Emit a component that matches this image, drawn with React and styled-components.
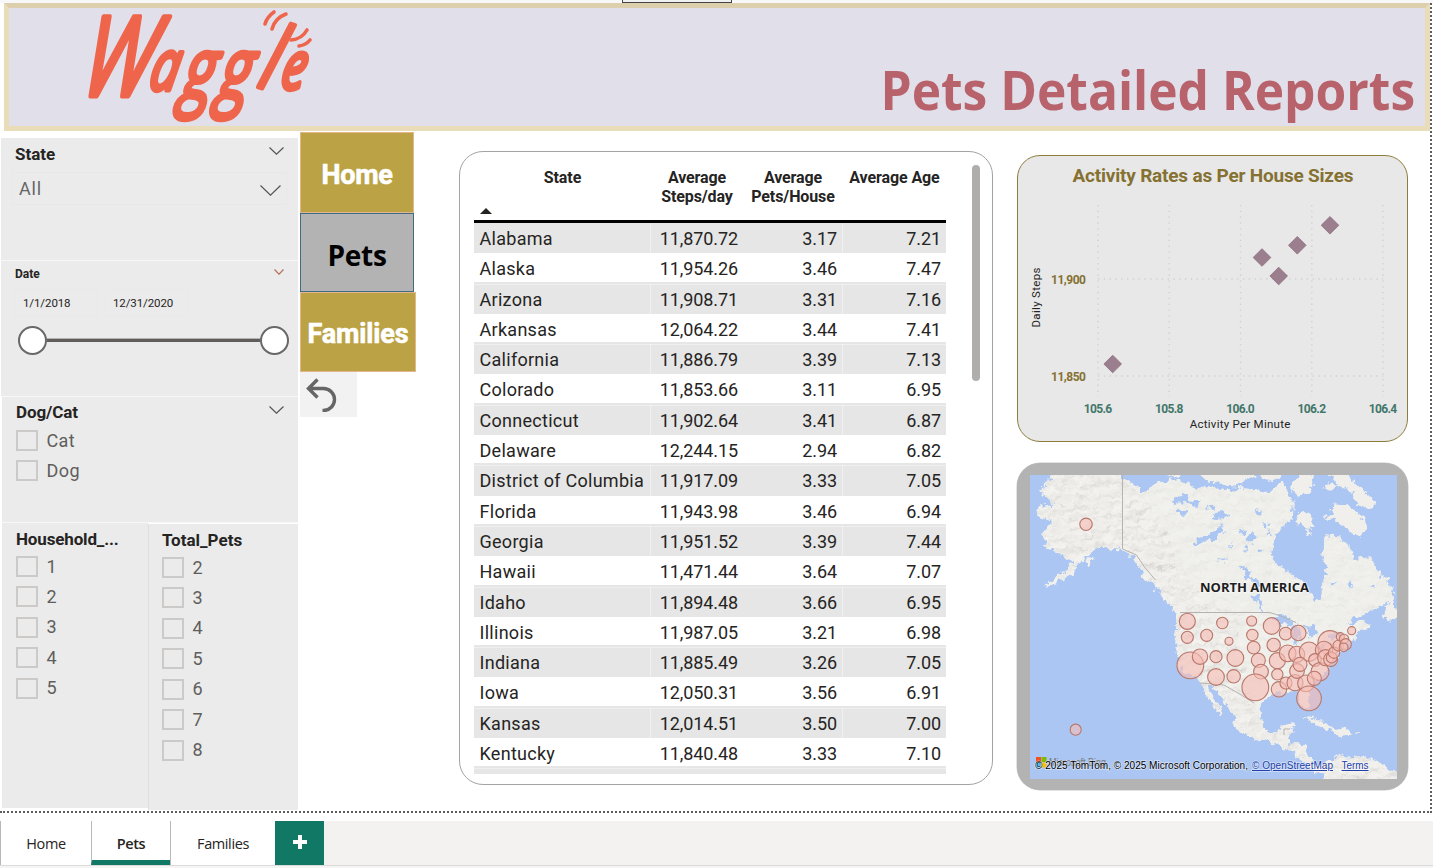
import React from "react";
import styled, { createGlobalStyle } from "styled-components";

const GlobalStyle = createGlobalStyle`
  * { box-sizing: border-box; }
  body { margin: 0; background: #fff; overflow: hidden; }
`;

const din = `Roboto, "Liberation Sans", sans-serif`;
const segoe = `"Open Sans", "Noto Sans", sans-serif`;

const Page = styled.div`
  width: 1442px;
  height: 868px;
  display: flex;
  flex-direction: column;
  font-family: ${din};
  color: #252423;
`;

const TopStrip = styled.div`
  width: 1433px;
  height: 3px;
  background: #f7f8f7;
  display: flex;
  justify-content: center;
  padding-right: 79px;
`;

const Handle = styled.div`
  width: 110px;
  height: 3px;
  background: #f0f0f0;
  border: 1px solid #444;
  border-top: 0;
`;

const Canvas = styled.div`
  width: 1432px;
  height: 810px;
  border-right: 2px dotted #605e5c;
  border-bottom: 2px dotted #605e5c;
`;

const Banner = styled.header`
  height: 128px;
  margin-left: 4px;
  padding-right: 10px;
  background: #e1dfe9;
  border: 5px solid #e9ddb9;
  border-top-color: #dccfae;
  display: flex;
  justify-content: space-between;
  align-items: flex-end;
`;

const Logo = styled.svg`
  width: 240px;
  height: 118px;
  margin-left: 71px;
  overflow: visible;
`;

const Title = styled.h1`
  margin: 0 0 6px;
  font: 700 54px/62px ${segoe};
  color: #b8626b;
  white-space: nowrap;
  transform: scaleX(${(p) => p.$stretch});
  transform-origin: right;
`;

const Body = styled.main`
  height: 680px;
  display: flex;
  align-items: flex-start;
  padding-left: 1px;
`;

const Sidebar = styled.aside`
  width: 297px;
  margin-top: 7px;
`;

const Panel = styled.section`
  height: ${(p) => p.$h}px;
  padding: ${(p) => p.$pad};
  margin-left: ${(p) => p.$inset || 0}px;
  background: #ebebeb;
  border-bottom: ${(p) => (p.$line ? "1px solid #f7f7f7" : "0")};
`;

const PanelHead = styled.div`
  display: flex;
  justify-content: space-between;
  align-items: flex-start;
`;

const PanelTitle = styled.div`
  font-weight: 700;
  font-size: ${(p) => p.$size || 17}px;
  line-height: 20px;
  letter-spacing: ${(p) => p.$ls || 0}px;
  white-space: nowrap;
`;

const Chevron = ({ w, h, color = "#555", mt = 0 }) => (
  <svg width={w} height={h} viewBox={`0 0 ${w} ${h}`} style={{ marginTop: mt }}>
    <path d={`M.5 .5 L${w / 2} ${h - 0.8} L${w - 0.5} .5`} fill="none" stroke={color} strokeWidth="1.2" />
  </svg>
);

const Dropdown = styled.div`
  display: flex;
  justify-content: space-between;
  align-items: center;
  height: 33px;
  margin: 8px -3px 0 -3px;
  padding: 0 5px 0 6px;
  border: 1px solid #e8e8e8;
  font-size: 18px;
  letter-spacing: 0.8px;
  color: #666;
`;

const DateRow = styled.div`
  display: flex;
  gap: 7px;
  margin-top: 5px;
`;

const DateBox = styled.div`
  width: 83px;
  height: 28px;
  padding-left: 7px;
  border: 1px solid #e9e9e9;
  font-size: 11.5px;
  line-height: 27px;
  letter-spacing: ${(p) => p.$ls}px;
`;

const Slider = styled.div`
  display: flex;
  align-items: center;
  width: 271px;
  margin: 9px 0 0 3px;
`;

const Knob = styled.div`
  width: 29px;
  height: 29px;
  border: 2px solid #6a6866;
  border-radius: 50%;
  background: #fff;
`;

const Track = styled.div`
  flex: 1;
  height: 4px;
  margin-top: -1px;
  background: #605e5c;
  border-top: 1px solid #b5b3b2;
`;

const CheckList = styled.div`
  display: flex;
  flex-direction: column;
  gap: 9.45px;
  margin-top: ${(p) => p.$top}px;
`;

const CheckRow = styled.label`
  display: flex;
  align-items: center;
  gap: 8.5px;
  height: 21px;
  font-size: 18px;
  line-height: 22px;
  letter-spacing: 0.4px;
  color: #605e5c;
`;

const Box = styled.span`
  width: 22px;
  height: 21px;
  border: 2px solid #cbcac9;
`;

const Split = styled.div`
  display: flex;
  align-items: flex-start;
`;

const HalfPanel = styled.section`
  width: ${(p) => p.$w}px;
  height: ${(p) => p.$h}px;
  margin: ${(p) => p.$m};
  padding: 6px 0 0 ${(p) => (p.$edge ? 13 : 14)}px;
  background: #ebebeb;
  border-left: ${(p) => (p.$edge ? "1px solid #dedede" : "0")};
`;

const Nav = styled.nav`
  width: 117px;
  margin: 1px 0 0 2px;
`;

const NavButton = styled.button`
  display: block;
  width: ${(p) => p.$w}px;
  height: ${(p) => p.$h || 80}px;
  margin: 0;
  padding: 4px 0 0;
  border: 1px solid ${(p) => (p.$active ? "#3f6b87" : "#e3b68d")};
  background: ${(p) => (p.$active ? "#b3b3b3" : "#bba244")};
  color: ${(p) => (p.$active ? "#000" : "#fff")};
  font: 700 ${(p) => (p.$active ? 28 : 27)}px/32px ${(p) => (p.$active ? segoe : din)};
  letter-spacing: ${(p) => p.$ls}px;
  -webkit-text-stroke: ${(p) => (p.$active ? 0 : 0.6)}px currentColor;
`;

const BackButton = styled.button`
  display: block;
  width: 57px;
  height: 45px;
  padding: 4px 0 0 6px;
  border: 0;
  background: #f2f2f2;
  text-align: left;
`;

const TableCard = styled.section`
  display: flex;
  width: 534px;
  height: 634px;
  margin: 20px 0 0 42px;
  padding: 13px 12px 9px 14px;
  border: 1px solid #a3a3a3;
  border-radius: 24px;
`;

const TableBody = styled.div`
  width: 472px;
  height: 609px;
  overflow: hidden;
`;

const cols = "177px 92px 100px 103px";

const HeadRow = styled.div`
  display: grid;
  grid-template-columns: ${cols};
  height: 58px;
  padding-top: 3px;
  border-bottom: 3px solid #000;
  font-weight: 700;
  font-size: 16px;
  line-height: 19px;
  text-align: center;
`;

const HeadCell = styled.div`
  position: relative;
  letter-spacing: -0.1px;
`;

const SortMark = styled.i`
  position: absolute;
  left: 6px;
  top: 40px;
  border: 6px solid transparent;
  border-top: 0;
  border-bottom-color: #252423;
`;

const Row = styled.div`
  display: grid;
  grid-template-columns: ${cols};
  height: 30.3px;
  font-size: 18px;
  line-height: 31px;
  color: #252423;
  background: ${(p) => (p.$shade ? "#e6e6e6" : "#fff")};
  box-shadow: ${(p) => (p.$shade && !p.$first ? "0 -2px 0 #e6e6e6, inset 0 1px 0 #efefef" : "none")};
  position: ${(p) => (p.$shade ? "relative" : "static")};
`;

const Cell = styled.div`
  padding: 0 5px 0 5.500px;
  letter-spacing: ${(p) => (p.$num ? -0.1 : 0.28)}px;
  text-align: ${(p) => (p.$num ? "right" : "left")};
  border-right: ${(p) => (p.$edge ? "1px solid rgba(255,255,255,.4)" : "0")};
  white-space: nowrap;
`;

const ScrollThumb = styled.div`
  width: 8px;
  height: 216px;
  margin-left: 26px;
  border-radius: 4px;
  background: #b0aeac;
`;

const RightColumn = styled.div`
  display: flex;
  flex-direction: column;
  gap: 21px;
  margin: 24px 0 0 24px;
`;

const ChartCard = styled.section`
  width: 391px;
  height: 287px;
  border: 1px solid #8f7d3c;
  border-radius: 23px;
  background: #e8e8e8;
  svg { display: block; margin: -1px; }
`;

const MapCard = styled.section`
  width: 391px;
  height: 327px;
  padding: 12px 11px 11px 13px;
  border-radius: 23px;
  background: #b3b3b3;
  box-shadow: 0 0 0 0.5px #c8c8c8;
  svg { display: block; }
`;

const TabBar = styled.footer`
  display: flex;
  width: 1433px;
  height: 45px;
  margin-top: 8px;
  background: #f3f2f1;
  border-bottom: 1px solid #dcdbda;
  font: 14.5px/44px ${segoe};
`;

const Tab = styled.div`
  width: ${(p) => p.$w}px;
  height: 44px;
  padding-top: 1px;
  background: #fff;
  border-left: 1px solid #b9b8b7;
  border-bottom: ${(p) => (p.$active ? "5px solid #117865" : "0")};
  font-weight: ${(p) => (p.$active ? 600 : 400)};
  text-align: center;
  letter-spacing: -0.4px;
`;

const AddTab = styled.button`
  width: 49px;
  height: 44px;
  padding: 0;
  border: 0;
  background: #117865;
`;

const BottomStrip = styled.div`
  width: 1433px;
  height: 2px;
  background: #f5f5f5;
`;

const rows = [
  ["Alabama", "11,870.72", "3.17", "7.21"],
  ["Alaska", "11,954.26", "3.46", "7.47"],
  ["Arizona", "11,908.71", "3.31", "7.16"],
  ["Arkansas", "12,064.22", "3.44", "7.41"],
  ["California", "11,886.79", "3.39", "7.13"],
  ["Colorado", "11,853.66", "3.11", "6.95"],
  ["Connecticut", "11,902.64", "3.41", "6.87"],
  ["Delaware", "12,244.15", "2.94", "6.82"],
  ["District of Columbia", "11,917.09", "3.33", "7.05"],
  ["Florida", "11,943.98", "3.46", "6.94"],
  ["Georgia", "11,951.52", "3.39", "7.44"],
  ["Hawaii", "11,471.44", "3.64", "7.07"],
  ["Idaho", "11,894.48", "3.66", "6.95"],
  ["Illinois", "11,987.05", "3.21", "6.98"],
  ["Indiana", "11,885.49", "3.26", "7.05"],
  ["Iowa", "12,050.31", "3.56", "6.91"],
  ["Kansas", "12,014.51", "3.50", "7.00"],
  ["Kentucky", "11,840.48", "3.33", "7.10"],
];

const Checks = ({ items, top }) => (
  <CheckList $top={top}>
    {items.map((t) => (
      <CheckRow key={t}><Box />{t}</CheckRow>
    ))}
  </CheckList>
);

const WaggleLogo = () => (
  <Logo viewBox="80 8 240 118">
    <g fill="#ee654c" stroke="#ee654c" strokeLinejoin="round" strokeLinecap="round">
      <text
        transform="translate(0 90) skewX(-11) scale(.73 1)"
        fontFamily="Open Sans, Noto Sans, sans-serif"
        fontStyle="italic"
        strokeWidth="5"
      >
        <tspan x="110" y="6" fontSize="111">W</tspan>
        <tspan x="202" y="0" fontSize="70">a</tspan>
        <tspan x="248" y="9" fontSize="86">g</tspan>
        <tspan x="298" y="9" fontSize="86">g</tspan>
        <tspan x="350" y="-4" fontSize="88" rotate="12">l</tspan>
        <tspan x="382" y="-1" fontSize="66">e</tspan>
      </text>
      <path fill="none" strokeWidth="3.6" d="M265 24q2-7 9-12M272 29q3-11 14-15M291 40q11-1 16-10M299 46q7-1 11-6" />
    </g>
  </Logo>
);

const diamonds = [[1112.7, 364], [1262, 257.5], [1278.7, 276], [1297.3, 245.3], [1330, 225.3]];
const xTicks = [[1098, "105.6"], [1169.2, "105.8"], [1240.5, "106.0"], [1311.8, "106.2"], [1383, "106.4"]];
const yTicks = [[279, "11,900"], [376, "11,850"]];

const ActivityChart = () => (
  <svg width="391" height="287" viewBox="1017 155 391 287" fontFamily="Roboto, sans-serif">
    <text x="1213" y="182" fontSize="19" fontWeight="700" fill="#857131" textAnchor="middle" textLength="281">
      Activity Rates as Per House Sizes
    </text>
    <g stroke="#cfcfcf" strokeWidth="1.3" strokeDasharray="1.3 4.5">
      {xTicks.map(([x]) => <line key={x} x1={x} x2={x} y1="205" y2="397" />)}
      {yTicks.map(([y]) => <line key={y} x1="1098" x2="1383" y1={y} y2={y} />)}
    </g>
    <g fontSize="12" fontWeight="700">
      {xTicks.map(([x, t]) => (
        <text key={t} x={x} y="413" fill="#42776a" textAnchor="middle" textLength="28.5">{t}</text>
      ))}
      {yTicks.map(([y, t]) => (
        <text key={t} x="1086" y={y + 4.5} fill="#857131" textAnchor="end" textLength="35">{t}</text>
      ))}
    </g>
    <g fill="#9c7f8e" stroke="#8b6c7c" strokeWidth=".8">
      {diamonds.map(([x, y]) => <path key={x} d={`M${x} ${y - 8.8}l8.8 8.8-8.8 8.8-8.8-8.8z`} />)}
    </g>
    <g fontSize="11.5" fill="#252423" textAnchor="middle">
      <text x="1240" y="428" textLength="100.5">Activity Per Minute</text>
      <text transform="translate(1040 297.5) rotate(-90)" textLength="60">Daily Steps</text>
    </g>
  </svg>
);

/* Bubble centres and radii, in thirds of a pixel from (1160, 600). */
const bubbles = [
  [82, 64, 25], [187, 69, 18], [275, 63, 16], [335, 78, 26], [82, 112, 19], [140, 106, 19],
  [207, 124, 13], [277, 105, 18], [377, 101, 20], [415, 99, 24], [575, 92, 13], [281, 143, 20],
  [341, 135, 21], [91, 196, 41], [120, 170, 24], [168, 170, 19], [226, 174, 26], [295, 181, 22],
  [352, 182, 25], [383, 160, 26], [410, 163, 25], [447, 155, 30], [510, 128, 37], [492, 150, 27],
  [168, 231, 26], [221, 229, 21], [303, 215, 23], [352, 223, 18], [286, 262, 41], [357, 268, 24],
  [378, 249, 19], [405, 248, 25], [438, 250, 26], [411, 213, 23], [420, 193, 22], [465, 180, 20],
  [480, 215, 28], [463, 235, 22], [447, 295, 38], [497, 173, 25], [512, 178, 22], [515, 173, 17],
  [522, 158, 18], [535, 137, 17], [541, 110, 13], [552, 117, 15], [557, 133, 18], [551, 142, 14],
  [-222, -227, 19.5], [-253, 389, 17.5],
];

const mainland =
  "M1053 472L1050 482 1041 490 1047 498 1057 505 1038 508 1038 516 1053 521 1043 535 1048 548 1060 553 1074 560 1066 572 1045 585 1058 582 1073 573 1080 562 1090 554 1100 545 1112 549 1122 550 1133 556 1139 566 1146 578 1155 585 1164 598 1177 612 1177 622 1176 645 1179 663 1185 672 1197 677 1202 687 1209 699 1222 715 1219 706 1212 696 1206 683 1214 686 1224 702 1237 718 1236 728 1250 736 1273 742 1290 750 1303 761 1314 770 1326 772 1322 782 1400 782 1400 773 1390 771 1378 762 1362 757 1347 757 1337 756 1326 763 1318 766 1309 758 1305 745 1288 743 1291 734 1294 724 1283 726 1278 733 1267 733 1260 718 1260 704 1267 695 1280 692 1297 690 1303 707 1309 709 1309 694 1311 683 1326 671 1331 662 1340 651 1347 642 1357 637 1360 629 1370 627 1364 621 1348 626 1340 630 1357 615 1373 610 1391 598 1393 588 1380 575 1370 557 1352 559 1349 546 1337 537 1325 536 1323 555 1328 572 1322 582 1321 600 1315 602 1307 588 1300 580 1277 565 1270 555 1272 542 1283 525 1292 518 1293 503 1282 484 1268 493 1243 488 1225 492 1210 486 1197 490 1177 480 1160 483 1143 493 1135 485 1122 478 1120 472z";
const islands =
  "M1160 472l12 5 12-5zM1196 472l10 7 28 6 14-6 8-7zM1260 472l8 8 10-2 4-6zM1299 474l11-2 2 12-4 10-10 3-6-10zM1297 520l5-9 10 8 3 8-9 1zM1327 472l10 12 16 8 4 12 12 5 5-5-10-12-14-15-6-5zM1325 518l10-6-2-7 14 1 14 10 4 14-6 6-14-8-12-10zM1330 491a4 4 0 1 1 .1 0M1386 618l-2-8 5-9 4-3 0 8 6 10-6 3zM1306 717l14 4 12 8-10-2-14-8zM1333 730l12-2 6 6-12 1zM1088 566l-2-5 5-3-2 7zM1356 733l4 0zM1307 530l4 3-4 3z";
const waters =
  "M1172 497l12-2 8 6 8 0-6 6-8-5-12 3zM1176 512l10-5 4 6-9 2zM1192 544l9-6 12-4-10 9-8 3zM1199 537l14-3 7-9 5 5-11 10zM1212 518l8-8 8 5-4 3-8 1zM1216 561l12-4-5 5zM1241 566l5 12 6 2-5-15zM1250 576l8 3 4 6-7-3zM1253 595l5 2 6 16-4-2zM1242 548l5-4 1 6zM1248 538l6-6 3 7-7 3zM1238 533l8-4-2 6zM1264 522l5 3-4 4zM1272 618l12-3 13 6-6 3-12 1zM1291 628l3 17 5-2 2-16-5-3zM1305 626l5 12 8-4-4-9zM1316 646l14-5 1 4-13 5zM1328 636l13-4 1 4-12 2zM1346 583l5-3 2 6-5 2zM1330 583l8 0-7 4zM1368 586l6-2 1 4zM1206 508l7-4 2 5zM1254 510l8 2-3 5zM1266 534l4-5 2 6zM1228 545l5-2 0 4zM1258 548l4 2-4 4z";

const BubbleMap = () => (
  <svg width="367" height="304" viewBox="1030 475 367 304">
    <defs>
      <filter id="coast" x="-5%" y="-5%" width="110%" height="110%">
        <feTurbulence type="fractalNoise" baseFrequency=".16" numOctaves="3" seed="4" result="n" />
        <feDisplacementMap in="SourceGraphic" in2="n" scale="10" xChannelSelector="R" yChannelSelector="G" />
      </filter>
      <filter id="relief" x="0" y="0" width="100%" height="100%">
        <feTurbulence type="fractalNoise" baseFrequency=".06 .12" numOctaves="3" seed="9" result="t" />
        <feDiffuseLighting in="t" surfaceScale="1.8" diffuseConstant="1.06" lightingColor="#f1f0ec" result="l">
          <feDistantLight azimuth="235" elevation="66" />
        </feDiffuseLighting>
        <feComposite in="l" in2="SourceGraphic" operator="in" />
      </filter>
      <clipPath id="land"><path d={mainland} /></clipPath>
    </defs>
    <rect x="1030" y="475" width="367" height="304" fill="#abc6f2" />
    <g filter="url(#coast)">
      <path d={mainland + islands} fill="#f0efeb" stroke="#f0efeb" strokeWidth="1.5" />
      <g clipPath="url(#land)">
        <path
          filter="url(#relief)"
          opacity=".7"
          d="M1030 470H1120L1160 520 1200 600 1240 615 1246 680 1262 720 1300 735 1315 782 1220 782 1170 680 1172 610 1130 560 1030 600zM1320 750h80v32h-80z"
        />
        <path filter="url(#relief)" opacity=".3" d="M1115 470H1400V690H1240L1230 610 1200 600z" />
      </g>
      <path d={waters} fill="#abc6f2" />
    </g>
    <g fill="none" stroke="#b4b3b1" strokeWidth="1">
      <path d="M1122.500 475V549l14 6 8 12 11 13M1180 612.500H1270l12 4 14 6M1200 683l24 2 14 8 16 10M1284 735v-6h6" />
    </g>
    <text x="1200" y="591.5" fontFamily="Open Sans, sans-serif" fontWeight="700" fontSize="13" fill="#1d1d1f"
      stroke="#fff" strokeWidth="1.5" strokeOpacity=".6" paintOrder="stroke" textLength="109" lengthAdjust="spacingAndGlyphs">
      NORTH AMERICA
    </text>
    <g fill="#f6bdb4" fillOpacity=".62" stroke="#b8776b" strokeWidth="1.1">
      {bubbles.map(([x, y, r], i) => (
        <circle key={i} cx={1160 + x / 3} cy={600 + y / 3} r={r / 3 - 0.3} />
      ))}
    </g>
    <g>
      <path fill="#f25022" d="M1036 757h5v5h-5z" /><path fill="#7fba00" d="M1041.500 757h5v5h-5z" />
      <path fill="#00a4ef" d="M1036 762.500h5v5h-5z" /><path fill="#ffb900" d="M1041.500 762.500h5v5h-5z" />
    </g>
    <g fontFamily="Liberation Sans, sans-serif" fontSize="10" stroke="#fff" strokeOpacity=".5" strokeWidth="1.5" paintOrder="stroke">
      <text x="1049" y="766" fill="#777" textLength="57" stroke="none" lengthAdjust="spacingAndGlyphs">Microsoft Bing</text>
      <text x="1035" y="769" fill="#000" textLength="213" lengthAdjust="spacingAndGlyphs">© 2025 TomTom, © 2025 Microsoft Corporation,</text>
      <g fill="#2340a8" textDecoration="underline">
        <text x="1252" y="769" textLength="81" lengthAdjust="spacingAndGlyphs">© OpenStreetMap</text>
        <text x="1341.500" y="769" textLength="27" lengthAdjust="spacingAndGlyphs">Terms</text>
      </g>
    </g>
  </svg>
);

export default function App() {
  return (
    <Page>
      <GlobalStyle />
      <TopStrip><Handle /></TopStrip>
      <Canvas>
        <Banner>
          <WaggleLogo />
          <Title $stretch={0.92}>Pets Detailed Reports</Title>
        </Banner>
        <Body>
          <Sidebar>
            <Panel $h={123} $pad="6px 14px 0 14px" $line>
              <PanelHead>
                <PanelTitle>State</PanelTitle>
                <Chevron w={15} h={8} mt={3} />
              </PanelHead>
              <Dropdown>All<Chevron w={21} h={11} mt={3} /></Dropdown>
            </Panel>
            <Panel $h={136} $pad="3px 14px 0 14px" $line>
              <PanelHead>
                <PanelTitle $size={12}>Date</PanelTitle>
                <Chevron w={10} h={6} mt={5} color="#b5705c" />
              </PanelHead>
              <DateRow>
                <DateBox $ls={-0.1}>1/1/2018</DateBox>
                <DateBox $ls={-0.1}>12/31/2020</DateBox>
              </DateRow>
              <Slider><Knob /><Track /><Knob /></Slider>
            </Panel>
            <Panel $h={126} $pad="5px 14px 0 14px" $inset={1} $line>
              <PanelHead>
                <PanelTitle $ls={-0.1}>Dog/Cat</PanelTitle>
                <Chevron w={15} h={8} mt={4} />
              </PanelHead>
              <Checks items={["Cat", "Dog"]} top={8} />
            </Panel>
            <Split>
              <HalfPanel $w={146} $h={285} $m="0 0 0 1px">
                <PanelTitle $ls={-0.15}>Household_...</PanelTitle>
                <Checks items={["1", "2", "3", "4", "5"]} top={7} />
              </HalfPanel>
              <HalfPanel $w={150} $h={286} $m="1px 0 0" $edge>
                <PanelTitle>Total_Pets</PanelTitle>
                <Checks items={["2", "3", "4", "5", "6", "7", "8"]} top={7} />
              </HalfPanel>
            </Split>
          </Sidebar>
          <Nav>
            <NavButton $w={114} $h={81} $ls={-0.3}>Home</NavButton>
            <NavButton $w={114} $h={79} $active $ls={-0.3}>Pets</NavButton>
            <NavButton $w={116} $ls={-0.15}>Families</NavButton>
            <BackButton aria-label="Back">
              <svg width="32" height="34" viewBox="0 0 32 34" fill="none" stroke="#666" strokeWidth="3.4">
                <path d="M11.500 1.500L2.500 10.500L11.500 19.500M3 10.500H17.500A11 11 0 0 1 17.500 32.500H16.500" />
              </svg>
            </BackButton>
          </Nav>
          <TableCard>
            <TableBody>
              <HeadRow>
                <HeadCell>State<SortMark /></HeadCell>
                <HeadCell>Average<br />Steps/day</HeadCell>
                <HeadCell>Average<br />Pets/House</HeadCell>
                <HeadCell>Average Age</HeadCell>
              </HeadRow>
              {rows.map((r, i) => (
                <Row key={r[0]} $shade={i % 2 === 0} $first={i === 0}>
                  <Cell $edge>{r[0]}</Cell>
                  <Cell $num>{r[1]}</Cell>
                  <Cell $num $edge>{r[2]}</Cell>
                  <Cell $num>{r[3]}</Cell>
                </Row>
              ))}
              <Row $shade />
            </TableBody>
            <ScrollThumb />
          </TableCard>
          <RightColumn>
            <ChartCard><ActivityChart /></ChartCard>
            <MapCard><BubbleMap /></MapCard>
          </RightColumn>
        </Body>
      </Canvas>
      <TabBar>
        <Tab $w={91}>Home</Tab>
        <Tab $w={79} $active>Pets</Tab>
        <Tab $w={105}>Families</Tab>
        <AddTab aria-label="Add page">
          <svg width="14" height="14" viewBox="0 0 14 14"><path d="M7 0v14M0 7h14" stroke="#fff" strokeWidth="4" /></svg>
        </AddTab>
      </TabBar>
      <BottomStrip />
    </Page>
  );
}
